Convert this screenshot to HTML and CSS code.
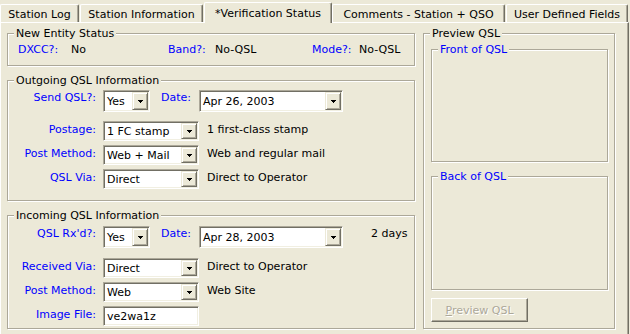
FILE: index.html
```html
<!DOCTYPE html>
<html>
<head>
<meta charset="utf-8">
<title>Verification Status</title>
<link rel="stylesheet" href="styles.css">
</head>
<body>
<div class="tabs">
  <div class="tab t1">Station Log</div>
  <div class="tab t2">Station Information</div>
  <div class="tab active t3">*Verification Status</div>
  <div class="tab t4">Comments - Station + QSO</div>
  <div class="tab t5">User Defined Fields</div>
</div>
<div class="panel">
  <div class="col-left">
    <div class="group g-entity">
      <span class="legend">New Entity Status</span>
      <div class="entity-row">
        <span class="lbl">DXCC?:</span><span>No</span>
        <span class="lbl">Band?:</span><span>No-QSL</span>
        <span class="lbl">Mode?:</span><span>No-QSL</span>
      </div>
    </div>

    <div class="group g-out">
      <span class="legend">Outgoing QSL Information</span>
      <div class="row row-first">
        <span class="lbl flabel">Send QSL?:</span>
        <div class="combo c-yes"><span class="val">Yes</span><span class="dd"><svg width="5" height="3" viewBox="0 0 5 3" shape-rendering="crispEdges"><path d="M0 0h5v1H0zM1 1h3v1H1zM2 2h1v1H2z"/></svg></span></div>
        <span class="lbl dlabel">Date:</span>
        <div class="combo c-date"><span class="val">Apr 26, 2003</span><span class="dd"><svg width="5" height="3" viewBox="0 0 5 3" shape-rendering="crispEdges"><path d="M0 0h5v1H0zM1 1h3v1H1zM2 2h1v1H2z"/></svg></span></div>
      </div>
      <div class="row">
        <span class="lbl flabel">Postage:</span>
        <div class="combo c-std"><span class="val">1 FC stamp</span><span class="dd"><svg width="5" height="3" viewBox="0 0 5 3" shape-rendering="crispEdges"><path d="M0 0h5v1H0zM1 1h3v1H1zM2 2h1v1H2z"/></svg></span></div>
        <span class="desc">1 first-class stamp</span>
      </div>
      <div class="row">
        <span class="lbl flabel">Post Method:</span>
        <div class="combo c-std"><span class="val">Web + Mail</span><span class="dd"><svg width="5" height="3" viewBox="0 0 5 3" shape-rendering="crispEdges"><path d="M0 0h5v1H0zM1 1h3v1H1zM2 2h1v1H2z"/></svg></span></div>
        <span class="desc">Web and regular mail</span>
      </div>
      <div class="row">
        <span class="lbl flabel">QSL Via:</span>
        <div class="combo c-std"><span class="val">Direct</span><span class="dd"><svg width="5" height="3" viewBox="0 0 5 3" shape-rendering="crispEdges"><path d="M0 0h5v1H0zM1 1h3v1H1zM2 2h1v1H2z"/></svg></span></div>
        <span class="desc">Direct to Operator</span>
      </div>
    </div>

    <div class="group g-in">
      <span class="legend">Incoming QSL Information</span>
      <div class="row row-first">
        <span class="lbl flabel">QSL Rx'd?:</span>
        <div class="combo c-yes"><span class="val">Yes</span><span class="dd"><svg width="5" height="3" viewBox="0 0 5 3" shape-rendering="crispEdges"><path d="M0 0h5v1H0zM1 1h3v1H1zM2 2h1v1H2z"/></svg></span></div>
        <span class="lbl dlabel">Date:</span>
        <div class="combo c-date"><span class="val">Apr 28, 2003</span><span class="dd"><svg width="5" height="3" viewBox="0 0 5 3" shape-rendering="crispEdges"><path d="M0 0h5v1H0zM1 1h3v1H1zM2 2h1v1H2z"/></svg></span></div>
        <span class="days">2 days</span>
      </div>
      <div class="row">
        <span class="lbl flabel">Received Via:</span>
        <div class="combo c-std"><span class="val">Direct</span><span class="dd"><svg width="5" height="3" viewBox="0 0 5 3" shape-rendering="crispEdges"><path d="M0 0h5v1H0zM1 1h3v1H1zM2 2h1v1H2z"/></svg></span></div>
        <span class="desc">Direct to Operator</span>
      </div>
      <div class="row">
        <span class="lbl flabel">Post Method:</span>
        <div class="combo c-std"><span class="val">Web</span><span class="dd"><svg width="5" height="3" viewBox="0 0 5 3" shape-rendering="crispEdges"><path d="M0 0h5v1H0zM1 1h3v1H1zM2 2h1v1H2z"/></svg></span></div>
        <span class="desc">Web Site</span>
      </div>
      <div class="row">
        <span class="lbl flabel">Image File:</span>
        <div class="combo c-std"><span class="val">ve2wa1z</span></div>
      </div>
    </div>
  </div>

  <div class="group g-preview">
    <span class="legend">Preview QSL</span>
    <div class="group g-front"><span class="legend blue">Front of QSL</span></div>
    <div class="group g-back"><span class="legend blue">Back of QSL</span></div>
    <div class="pbtn"><span><u>P</u>review QSL</span></div>
  </div>
</div>
</body>
</html>
```

FILE: styles.css
```css
html, body {
  margin: 0;
  padding: 0;
}
body {
  width: 630px;
  height: 334px;
  overflow: hidden;
  background: #ECE9D8;
  font-family: "DejaVu Sans", Verdana, sans-serif;
  font-size: 11px;
  line-height: 13px;
  color: #000;
}

/* Tabs */
.tabs {
  display: flex;
  align-items: flex-end;
  height: 22px;
  position: relative;
  z-index: 1;
}
.tab {
  box-sizing: border-box;
  height: 18px;
  padding-top: 3px;
  margin-right: 1px;
  text-align: center;
  white-space: nowrap;
  border-top: 1px solid #fff;
  border-left: 1px solid #fff;
  border-right: 1px solid #716F64;
  box-shadow: inset -1px 0 #ACA899;
  border-radius: 2px 2px 0 0;
}
.tab.active {
  height: 21px;
  margin-bottom: -1px;
  padding-top: 4px;
  background: #ECE9D8;
}
.t1 { width: 79px; }
.t2 { width: 123px; }
.t3 { width: 128px; margin-right: 0; }
.t4 { width: 173px; }
.t5 { width: 122px; }

/* Panel */
.panel {
  box-sizing: border-box;
  width: 629px;
  height: 312px;
  border-top: 1px solid #fff;
  border-left: 1px solid #fff;
  border-right: 1px solid #716F64;
  box-shadow: inset -1px 0 #ACA899;
  padding: 10px 0 0 6px;
  display: flex;
  align-items: flex-start;
  gap: 8px;
}
.col-left {
  display: flex;
  flex-direction: column;
  gap: 14px;
  width: 408px;
}

/* Group boxes */
.group {
  position: relative;
  box-sizing: border-box;
  border: 1px solid #ACA899;
  box-shadow: inset 1px 1px #fff, 1px 1px #fff;
}
.legend {
  position: absolute;
  top: -7px;
  left: 6px;
  padding: 0 2px;
  background: #ECE9D8;
  white-space: nowrap;
}
.legend.blue { color: #0000FF; }

.lbl { color: #0000FF; white-space: nowrap; }

.g-entity {
  height: 33px;
  padding: 9px 0 0 10px;
}
.entity-row {
  display: grid;
  grid-template-columns: 53px 97px 47px 97px 47px auto;
}

.g-out {
  height: 121px;
  padding: 9px 0 0 4px;
  display: flex;
  flex-direction: column;
}
.g-in {
  height: 114px;
  padding: 10px 0 0 4px;
  display: flex;
  flex-direction: column;
}
.row {
  display: flex;
  align-items: flex-start;
}
.row + .row { margin-top: 4px; }
.g-out .row-first { margin-bottom: 5px; }
.g-in .row-first { margin-bottom: 6px; }

.flabel {
  width: 84px;
  margin-right: 7px;
  margin-top: 2px;
  text-align: right;
}
.row-first .flabel { margin-top: 1px; }
.dlabel {
  width: 38px;
  margin-left: 11px;
  margin-top: 1px;
}
.desc {
  margin-left: 8px;
  margin-top: 2px;
  white-space: nowrap;
}
.days {
  margin-left: 28px;
  margin-top: 1px;
  white-space: nowrap;
}

/* Combo boxes */
.combo {
  box-sizing: border-box;
  height: 20px;
  padding: 1px;
  display: flex;
  align-items: stretch;
  background: #fff;
  border: 1px solid;
  border-color: #ACA899 #fff #fff #ACA899;
  box-shadow: inset 1px 1px #716F64, inset -1px -1px #F1EFE2;
}
.c-yes { width: 47px; height: 22px; }
.c-date { width: 144px; height: 22px; }
.c-std { width: 96px; }
.val {
  flex: 1;
  display: flex;
  align-items: center;
  padding-left: 2px;
  white-space: nowrap;
  overflow: hidden;
}
.dd {
  box-sizing: border-box;
  width: 16px;
  display: flex;
  align-items: center;
  justify-content: center;
  background: #ECE9D8;
  border: 1px solid;
  border-color: #ECE9D8 #716F64 #716F64 #ECE9D8;
  box-shadow: inset 1px 1px #fff, inset -1px -1px #ACA899;
}
.dd svg { display: block; fill: #000; }

/* Preview */
.g-preview {
  width: 192px;
  height: 296px;
  padding: 15px 6px 0 7px;
}
.g-front {
  height: 113px;
  margin-bottom: 14px;
}
.g-back {
  height: 114px;
}
.pbtn {
  box-sizing: border-box;
  margin-top: 8px;
  width: 97px;
  height: 24px;
  display: flex;
  align-items: center;
  justify-content: center;
  border: 1px solid;
  border-color: #fff #716F64 #716F64 #fff;
  box-shadow: inset -1px -1px #ACA899;
  color: #ACA899;
  text-shadow: 1px 1px 0 #fff;
  white-space: nowrap;
}
.pbtn u { text-decoration-color: #ACA899; }
```
